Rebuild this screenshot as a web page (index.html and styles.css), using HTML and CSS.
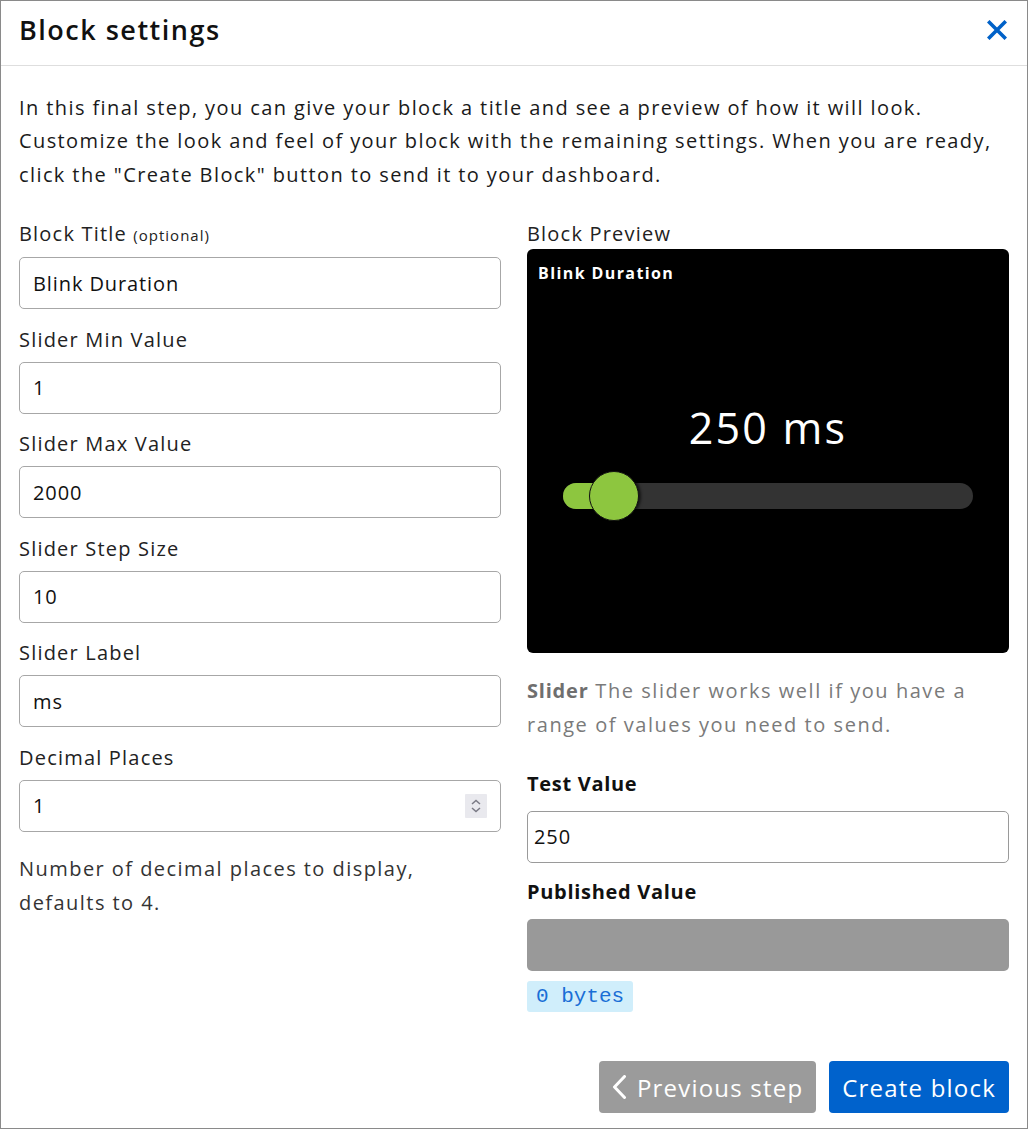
FILE: index.html
```html
<!DOCTYPE html>
<html lang="en">
<head>
<meta charset="utf-8">
<title>Block settings</title>
<link rel="stylesheet" href="styles.css">
</head>
<body>
<div class="modal">
  <header class="modal-header">
    <h1 class="modal-title">Block settings</h1>
    <button class="close" aria-label="Close">
      <svg width="20" height="20" viewBox="0 0 20 20"><path d="M2.5 2.5 L17.5 17.5 M17.5 2.5 L2.5 17.5" stroke="#0061c8" stroke-width="3.6" stroke-linecap="square" fill="none"/></svg>
    </button>
  </header>
  <main class="modal-body">
    <p class="intro">In this final step, you can give your block a title and see a preview of how it will look. Customize the look and feel of your block with the remaining settings. When you are ready, click the "Create Block" button to send it to your dashboard.</p>
    <div class="columns">
      <div class="col">
        <label class="label">Block Title <small>(optional)</small></label>
        <div class="field"><input class="input" type="text" value="Blink Duration"></div>
        <label class="label">Slider Min Value</label>
        <div class="field"><input class="input" type="text" value="1"></div>
        <label class="label">Slider Max Value</label>
        <div class="field"><input class="input" type="text" value="2000"></div>
        <label class="label">Slider Step Size</label>
        <div class="field"><input class="input" type="text" value="10"></div>
        <label class="label">Slider Label</label>
        <div class="field"><input class="input" type="text" value="ms"></div>
        <label class="label">Decimal Places</label>
        <div class="field"><input class="input" type="text" value="1">
          <span class="spinner"><svg width="22" height="24" viewBox="0 0 22 24"><path d="M7 10 L11 6.5 L15 10 M7 14 L11 17.5 L15 14" stroke="#7a7a85" stroke-width="1.5" fill="none"/></svg></span>
        </div>
        <p class="help">Number of decimal places to display, defaults to 4.</p>
      </div>
      <div class="col">
        <div class="label">Block Preview</div>
        <div class="preview">
          <div class="preview-title">Blink Duration</div>
          <div class="preview-value">250 ms</div>
          <div class="slider">
            <div class="slider-fill" style="width: 51px"></div>
            <div class="slider-thumb" style="left: 26px"></div>
          </div>
        </div>
        <p class="desc"><strong>Slider</strong> The slider works well if you have a range of values you need to send.</p>
        <div class="label bold test-label">Test Value</div>
        <input class="input small" type="text" value="250">
        <div class="label bold pub-label">Published Value</div>
        <div class="published"></div>
        <div class="bytes">0 bytes</div>
      </div>
    </div>
  </main>
  <footer class="modal-footer">
    <button class="btn btn-gray">
      <svg width="15" height="24" viewBox="0 0 15 24"><path d="M12.5 1.5 L2.5 12 L12.5 22.5" stroke="#fff" stroke-width="3" fill="none" stroke-linecap="round" stroke-linejoin="round"/></svg>
      Previous step
    </button>
    <button class="btn btn-blue">Create block</button>
  </footer>
</div>
</body>
</html>
```

FILE: styles.css
```css
* { box-sizing: border-box; }
html, body { margin: 0; padding: 0; background: #fff; }
body { font-family: "Open Sans", Lato, sans-serif; color: #111; }

.modal {
  width: 1028px;
  height: 1129px;
  border: 1px solid #8a8a8a;
  display: flex;
  flex-direction: column;
}

.modal-header {
  height: 65px;
  border-bottom: 1px solid #dedede;
  display: flex;
  align-items: center;
  justify-content: space-between;
  padding: 0 20px 6px 18px;
  flex-shrink: 0;
}
.modal-title {
  margin: 0;
  font-size: 27px;
  line-height: 34px;
  font-weight: 600;
  color: #111;
  letter-spacing: 1.5px;
}
.close {
  background: none;
  border: 0;
  padding: 0;
  width: 20px;
  height: 20px;
  display: flex;
  cursor: pointer;
}

.modal-body {
  padding: 24.5px 18px 0;
  flex: 1;
}
.intro {
  margin: 0 0 28px;
  font-size: 20px;
  line-height: 33.5px;
  color: #1a1a1a;
  letter-spacing: 1.4px;
}

.columns {
  display: grid;
  grid-template-columns: 1fr 1fr;
  column-gap: 26px;
}
.col { display: flex; flex-direction: column; }

.label {
  display: block;
  font-size: 20px;
  line-height: 30px;
  color: #222;
  margin-bottom: 7px;
  letter-spacing: 1.2px;
}
.label small { font-size: 15px; letter-spacing: 1px; }
.field + .label { margin-top: 15.5px; }
.label.bold { font-weight: 700; color: #111; letter-spacing: 0.7px; }

.field {
  height: 52px;
  border: 1px solid #a7a7a7;
  border-radius: 5px;
  display: flex;
  align-items: center;
  padding: 0 13px 0 0;
}
.field .input { border: 0; height: 100%; flex: 1; min-width: 0; }
.input {
  font-family: inherit;
  font-size: 20px;
  color: #111;
  padding: 0 0 0 13px;
  background: transparent;
  outline: none;
  letter-spacing: 0.9px;
}
.spinner {
  width: 22px;
  height: 24px;
  background: #e9e9ee;
  display: flex;
  border-radius: 1px;
}

.help {
  margin: 20px 0 0;
  font-size: 20px;
  line-height: 34px;
  color: #333;
  letter-spacing: 1.45px;
}

.preview {
  margin-top: -7.5px;
  height: 404px;
  background: #000;
  border-radius: 6px;
  display: flex;
  flex-direction: column;
  padding: 13px 11px 0;
}
.preview-title {
  color: #fff;
  font-weight: 700;
  font-size: 16px;
  line-height: 22px;
  letter-spacing: 1.4px;
}
.preview-value {
  color: #fff;
  font-size: 43px;
  line-height: 56px;
  text-align: center;
  margin-top: 116px;
  letter-spacing: 2.2px;
}
.slider {
  position: relative;
  margin: 27px 25px 0;
  height: 26px;
  background: #333;
  border-radius: 13px;
}
.slider-fill {
  height: 100%;
  background: #8dc63f;
  border-radius: 13px 0 0 13px;
}
.slider-thumb {
  position: absolute;
  top: -12px;
  width: 50px;
  height: 50px;
  border-radius: 50%;
  background: #8dc63f;
  border: 1.5px solid #111;
  box-shadow: 2px 0 3px rgba(0,0,0,0.6);
}

.desc {
  margin: 21px 0 0;
  font-size: 20px;
  line-height: 34px;
  color: #7a7a7a;
  letter-spacing: 1.55px;
}
.desc strong { color: #6f6f6f; font-weight: 700; letter-spacing: 0.8px; }

.test-label { margin-top: 27px; margin-bottom: 12px; }
.input.small {
  height: 52px;
  width: 100%;
  border: 1px solid #9a9a9a;
  border-radius: 5px;
  padding-left: 6px;
}
.pub-label { margin-top: 14px; margin-bottom: 12px; }
.published {
  height: 52px;
  background: #999;
  border-radius: 5px;
}
.bytes {
  align-self: flex-start;
  margin-top: 10px;
  background: #d0eefb;
  color: #1a6fd6;
  font-family: "Liberation Mono", "DejaVu Sans Mono", monospace;
  font-size: 21px;
  line-height: 31px;
  padding: 0 9px;
  border-radius: 3px;
}

.modal-footer {
  display: flex;
  justify-content: flex-end;
  gap: 13px;
  padding: 0 18px 15px;
}
.btn {
  height: 52px;
  border: 0;
  border-radius: 4px;
  color: #fff;
  font-family: inherit;
  font-size: 24px;
  display: flex;
  align-items: center;
  gap: 10px;
  padding: 0 13px;
  letter-spacing: 1.2px;
  cursor: pointer;
}
.btn-gray { background: #9b9b9b; }
.btn-blue { background: #0062cc; }
```
